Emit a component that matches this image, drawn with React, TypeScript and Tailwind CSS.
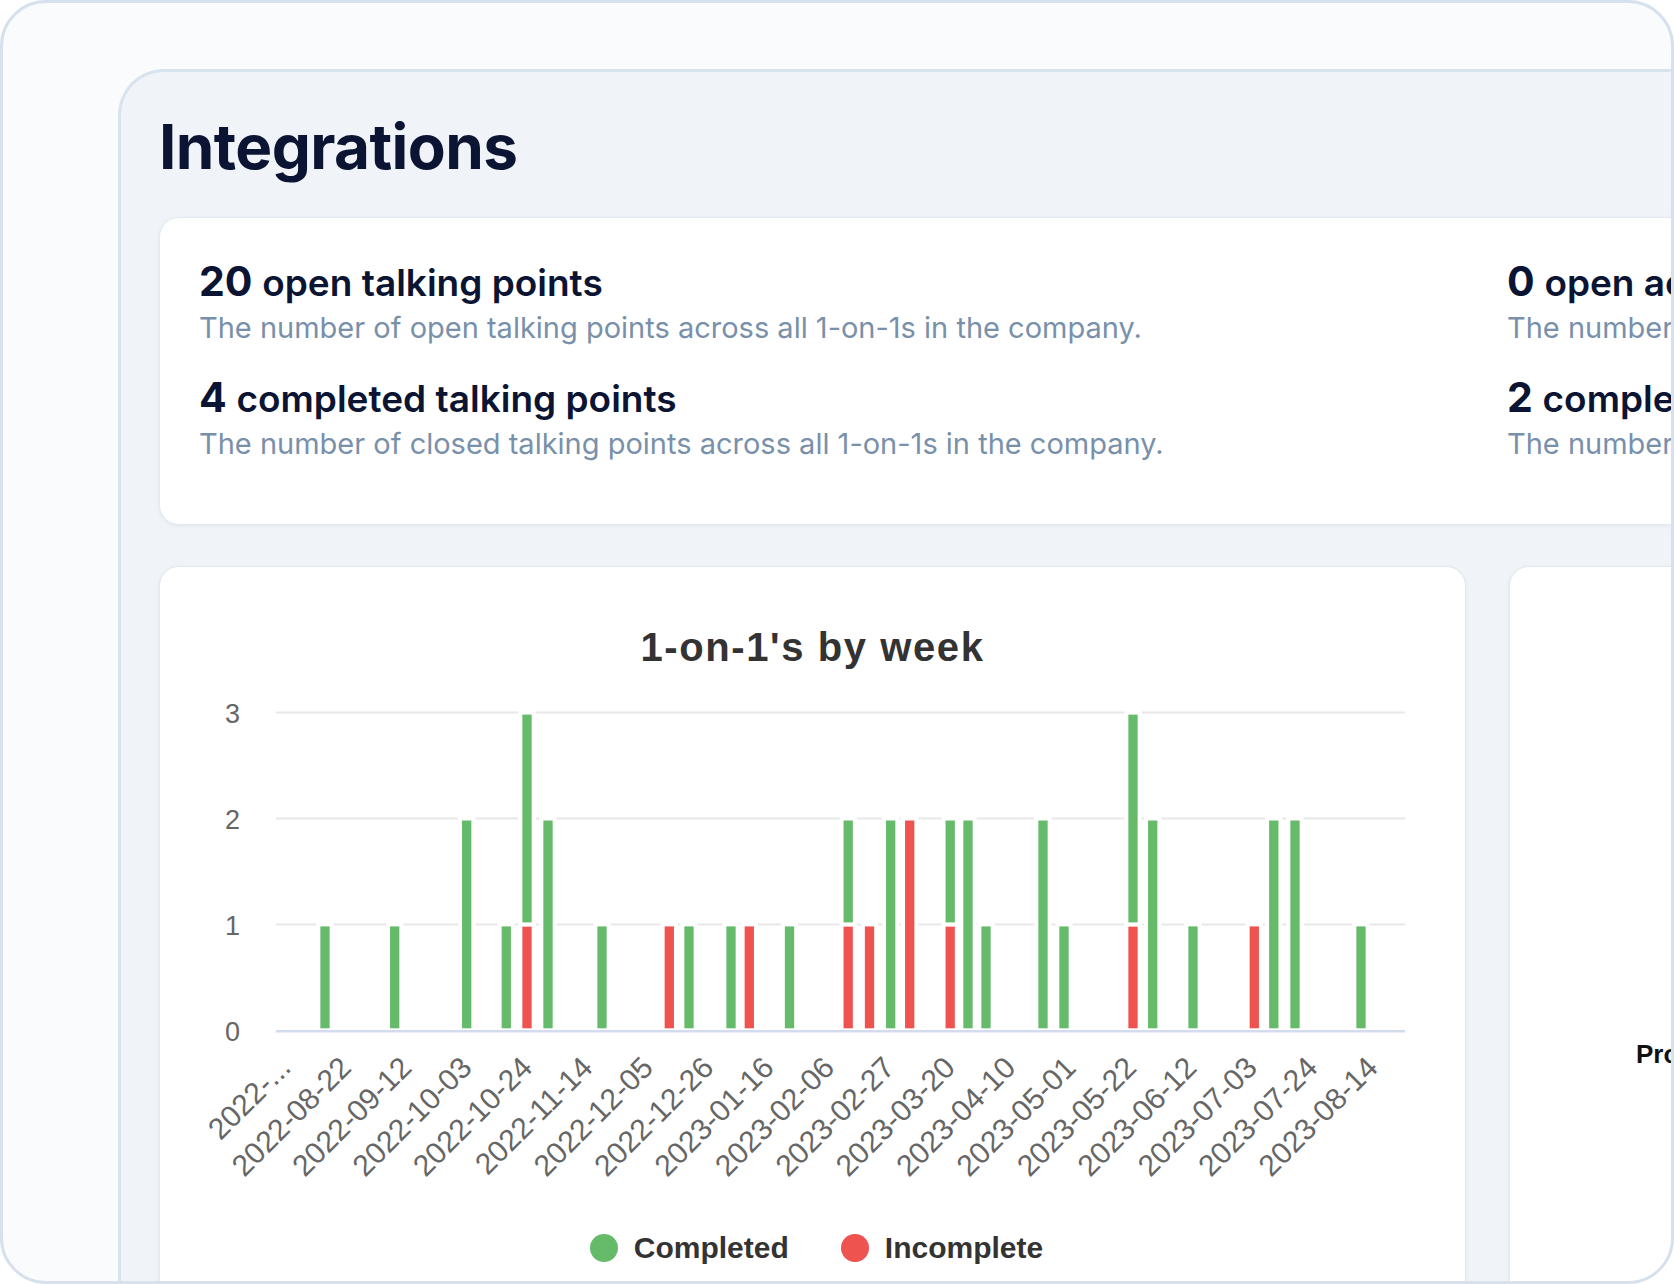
import React from "react";

const bars: [number, number, number][] = [
  [325, 1, 0], [394.7, 1, 0], [466.7, 2, 0], [506.3, 1, 0], [527, 2, 1], [548, 2, 0],
  [602, 1, 0], [669.3, 0, 1], [689, 1, 0], [731, 1, 0], [749.3, 0, 1], [789.5, 1, 0],
  [848.2, 1, 1], [869.5, 0, 1], [890.7, 2, 0], [909.7, 0, 2], [950.2, 1, 1], [968, 2, 0],
  [986, 1, 0], [1043, 2, 0], [1064, 1, 0], [1133, 2, 1], [1152.7, 2, 0], [1193, 1, 0],
  [1254.3, 0, 1], [1273.8, 2, 0], [1295, 2, 0], [1361, 1, 0],
];

const labels = [
  "2022-...", "2022-08-22", "2022-09-12", "2022-10-03", "2022-10-24", "2022-11-14",
  "2022-12-05", "2022-12-26", "2023-01-16", "2023-02-06", "2023-02-27", "2023-03-20",
  "2023-04-10", "2023-05-01", "2023-05-22", "2023-06-12", "2023-07-03", "2023-07-24",
  "2023-08-14",
];

const OX = 160;
const yOf = (v: number) => 339.3 - 105.9 * v;
const GREEN = "#66bb6a";
const RED = "#ef5350";

function Chart() {
  const bw = 13.3;
  return (
    <svg width={1305} height={510} className="block" style={{ fontFamily: '"Liberation Sans", Arial, sans-serif' }}>
      {[1, 2, 3].map((v) => (
        <line key={v} x1={116} x2={1245} y1={yOf(v)} y2={yOf(v)} stroke="#e8e8e8" strokeWidth={2} />
      ))}
      {[0, 1, 2, 3].map((v) => (
        <text key={v} x={80} y={yOf(v) + 1.5} textAnchor="end" dominantBaseline="central" fontSize={27} fill="#666">
          {v}
        </text>
      ))}
      {bars.map(([ax, c, i], k) => {
        const cx = ax - OX;
        const segs: React.ReactNode[] = [];
        if (i > 0) {
          segs.push(
            <rect key="i" x={cx - bw / 2} y={yOf(i)} width={bw} height={yOf(0) - yOf(i)} fill={RED} stroke="#fff" strokeWidth={4} />
          );
        }
        if (c > 0) {
          segs.push(
            <rect key="c" x={cx - bw / 2} y={yOf(i + c)} width={bw} height={yOf(i) - yOf(i + c)} fill={GREEN} stroke="#fff" strokeWidth={4} />
          );
        }
        return <g key={k}>{segs}</g>;
      })}
      <line x1={116} x2={1245} y1={yOf(0) + 1} y2={yOf(0) + 1} stroke="#d3dcef" strokeWidth={2.5} />
      {labels.map((l, k) => {
        const x = 125 + 60.4 * k;
        const y = 371;
        return (
          <text
            key={l}
            x={x}
            y={y}
            textAnchor="end"
            dominantBaseline="central"
            fontSize={30}
            fill="#666"
            transform={`rotate(-45 ${x} ${y})`}
          >
            {l}
          </text>
        );
      })}
    </svg>
  );
}

function Stat({ n, label, desc }: { n: string; label: string; desc: string }) {
  return (
    <div>
      <div className="text-[41px] leading-[48px] font-bold text-[#0b1533] whitespace-nowrap">
        {n} <span className="text-[37px] leading-none font-semibold">{label}</span>
      </div>
      <div className="mt-[3px] text-[29px] leading-[40px] text-[#7990aa] whitespace-nowrap">{desc}</div>
    </div>
  );
}

export default function App() {
  return (
    <div className="w-[1674px] h-[1284px] bg-white" style={{ fontFamily: 'Inter, "Noto Sans", sans-serif' }}>
      <div className="w-full h-full rounded-[46px] border-[3px] border-[#d6e1ed] bg-[#fafbfd] overflow-hidden">
        <div className="ml-[115px] mt-[66px] w-[2740px] h-[1400px] rounded-tl-[46px] border-l-[3px] border-t-[3px] border-[#d9e3ee] bg-[#f0f4f8] pl-[38px] pt-[44px]">
          <h1 className="text-[62px] leading-[62px] font-bold text-[#0b1533] tracking-[-0.6px]">Integrations</h1>
          <div className="mt-[39px] w-[2657px] h-[308px] rounded-[20px] bg-white border border-[#e3e9f0] shadow-[0_1px_4px_rgba(15,23,42,0.06)] px-[39px] pt-[39px] grid grid-cols-2 gap-x-[39px]">
            <div className="flex flex-col gap-[25px]">
              <Stat n="20" label="open talking points" desc="The number of open talking points across all 1-on-1s in the company." />
              <Stat n="4" label="completed talking points" desc="The number of closed talking points across all 1-on-1s in the company." />
            </div>
            <div className="flex flex-col gap-[25px]">
              <Stat n="0" label="open action items" desc="The number of open action items across all 1-on-1s in the company." />
              <Stat n="2" label="completed action items" desc="The number of closed action items across all 1-on-1s in the company." />
            </div>
          </div>
          <div className="mt-[41px] flex gap-[43px]">
            <div className="w-[1307px] h-[760px] shrink-0 rounded-[20px] bg-white border border-[#e3e9f0] shadow-[0_1px_4px_rgba(15,23,42,0.06)] pt-[60px]">
              <div
                className="text-center text-[40px] leading-[40px] font-bold text-[#333] tracking-[1.6px]"
                style={{ fontFamily: '"Liberation Sans", Arial, sans-serif' }}
              >
                1-on-1's by week
              </div>
              <div className="mt-[24px]">
                <Chart />
              </div>
              <div
                className="mt-[32px] pl-[8px] flex items-center justify-center h-[30px]"
                style={{ fontFamily: '"Liberation Sans", Arial, sans-serif' }}
              >
                <span className="w-[28px] h-[28px] rounded-full bg-[#66bb6a]" />
                <span className="ml-[16px] text-[30px] leading-none font-bold text-[#333]">Completed</span>
                <span className="ml-[52px] w-[28px] h-[28px] rounded-full bg-[#ef5350]" />
                <span className="ml-[16px] text-[30px] leading-none font-bold text-[#333]">Incomplete</span>
              </div>
            </div>
            <div className="w-[1307px] h-[760px] shrink-0 rounded-[20px] bg-white border border-[#e3e9f0] shadow-[0_1px_4px_rgba(15,23,42,0.06)] pt-[474px] pl-[126px]">
              <div
                className="text-[26px] leading-[26px] font-bold text-[#111]"
                style={{ fontFamily: '"Liberation Sans", Arial, sans-serif' }}
              >
                Progress
              </div>
            </div>
          </div>
        </div>
      </div>
    </div>
  );
}
